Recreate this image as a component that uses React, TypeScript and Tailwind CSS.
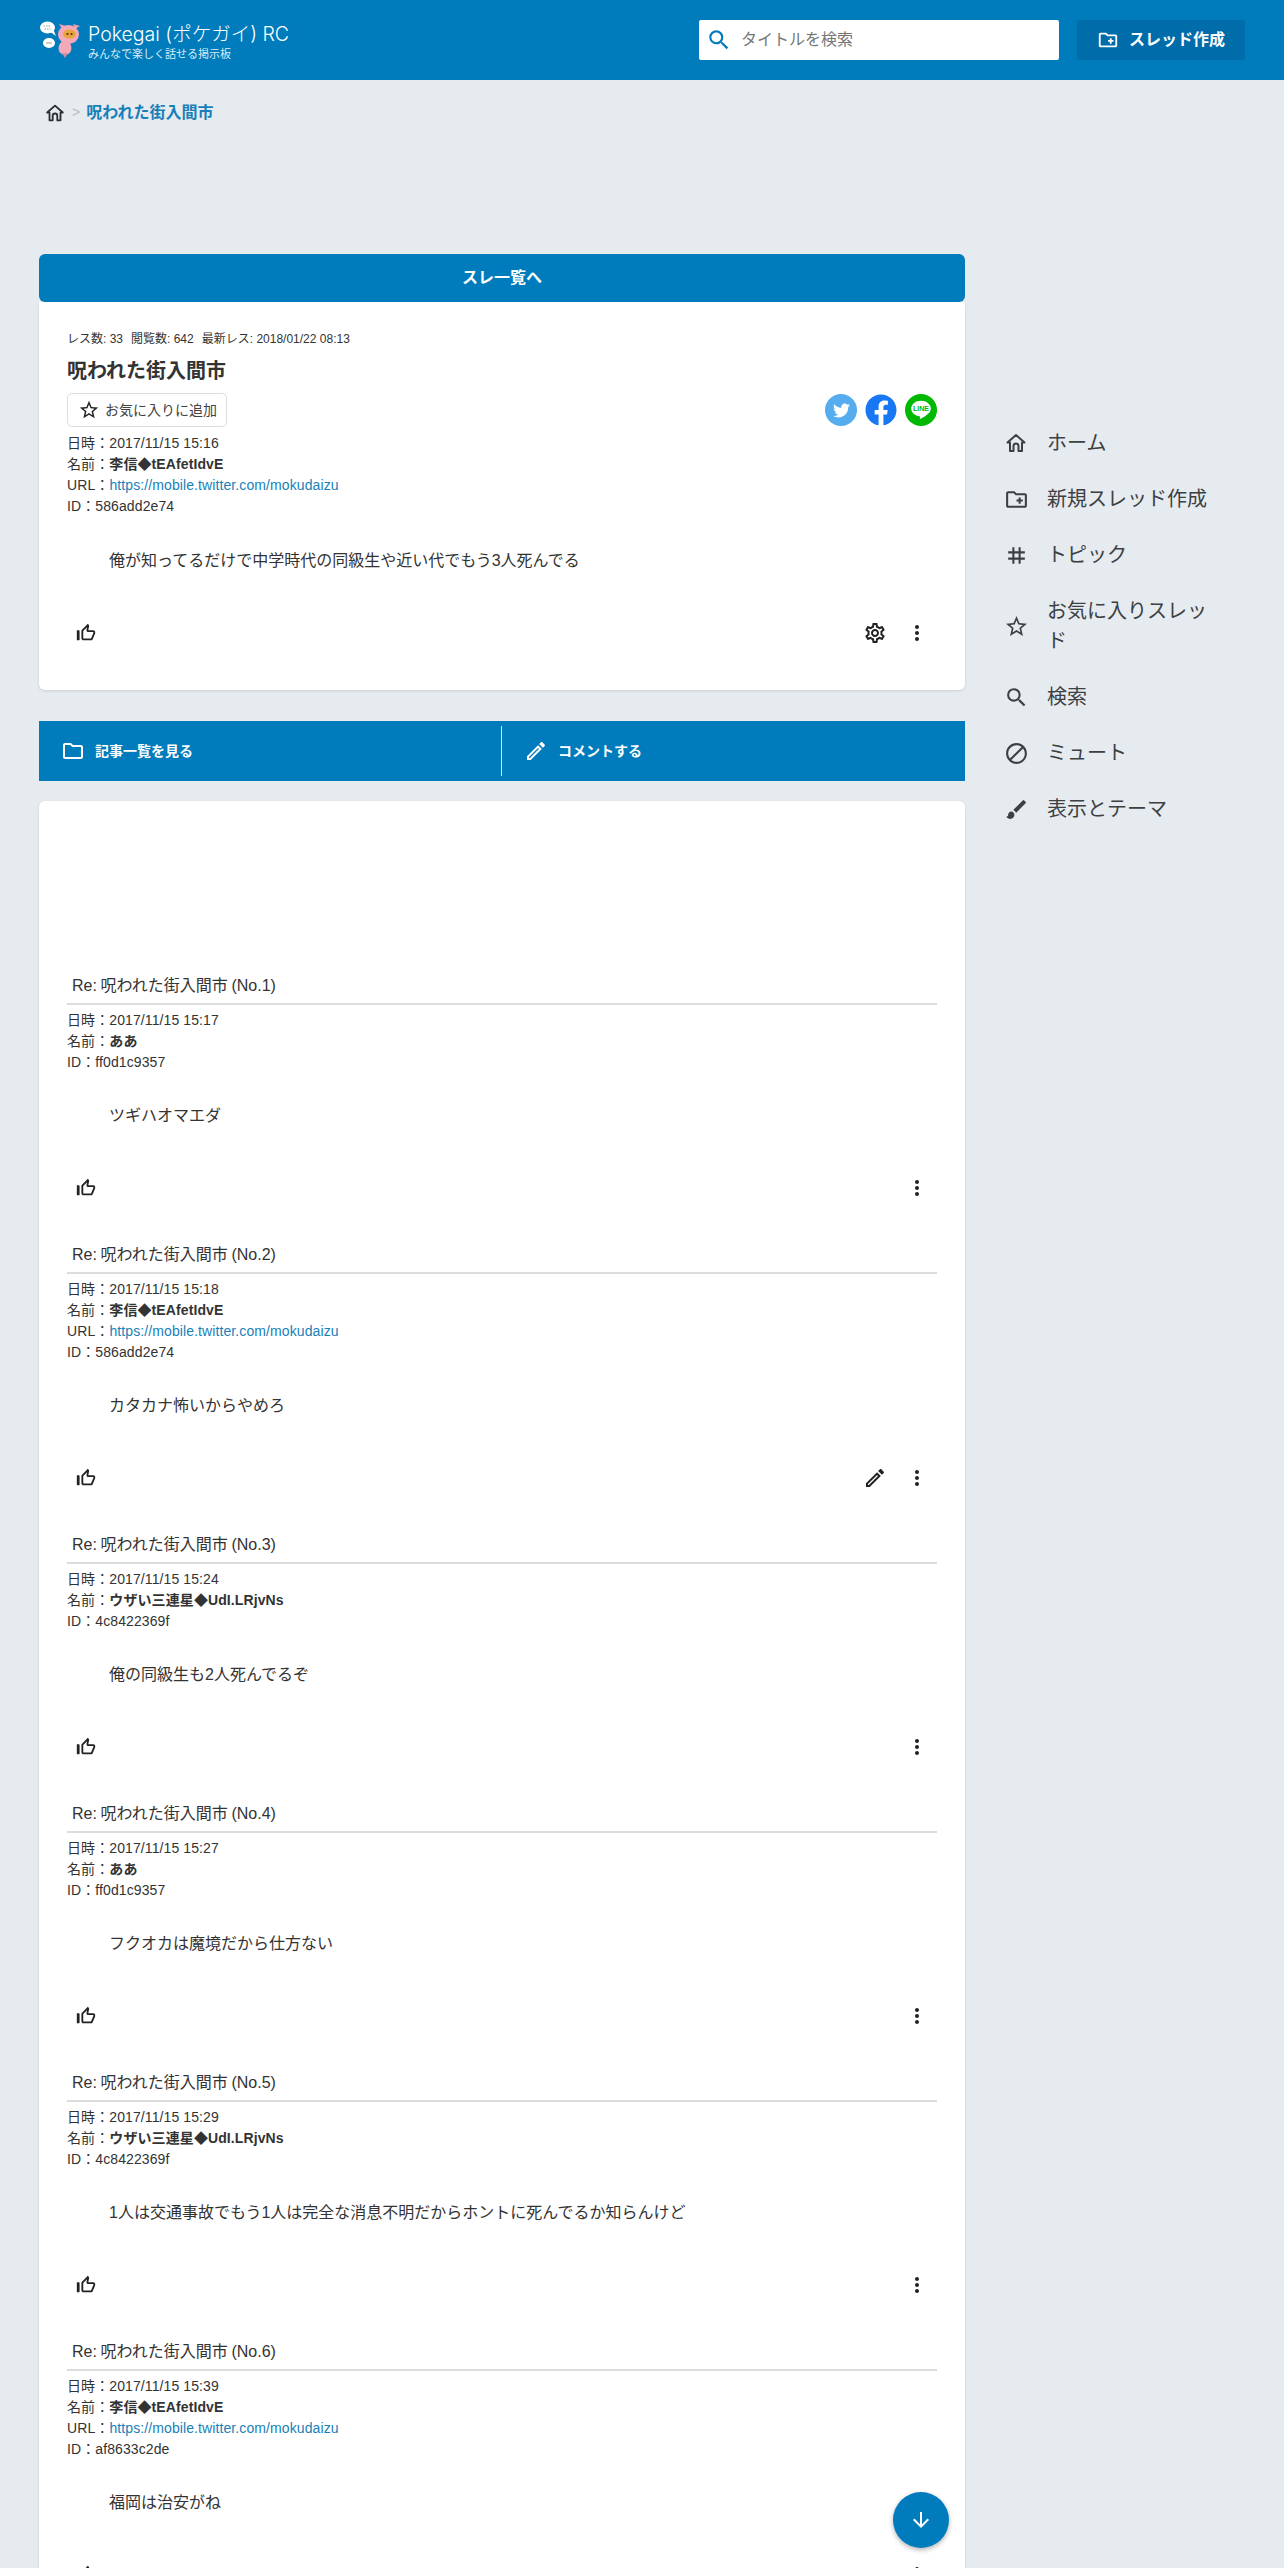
import type { ReactNode } from "react";
import {
  MdArrowDownward,
  MdBlock,
  MdBrush,
  MdMoreVert,
  MdOutlineCreateNewFolder,
  MdOutlineEdit,
  MdOutlineFolder,
  MdOutlineSettings,
  MdThumbUpOffAlt,
  MdSearch,
  MdStarBorder,
  MdTag,
} from "react-icons/md";
import { FaFacebook, FaTwitter } from "react-icons/fa";

const sans = "font-['Liberation_Sans','Noto_Sans_CJK_JP',sans-serif]";

interface PostData {
  no: number;
  date: string;
  name: string;
  url?: boolean;
  id: string;
  body: string;
  edit?: boolean;
}

const posts: PostData[] = [
  { no: 1, date: "2017/11/15 15:17", name: "ああ", id: "ff0d1c9357", body: "ツギハオマエダ" },
  { no: 2, date: "2017/11/15 15:18", name: "李信◆tEAfetIdvE", url: true, id: "586add2e74", body: "カタカナ怖いからやめろ", edit: true },
  { no: 3, date: "2017/11/15 15:24", name: "ウザい三連星◆UdI.LRjvNs", id: "4c8422369f", body: "俺の同級生も2人死んでるぞ" },
  { no: 4, date: "2017/11/15 15:27", name: "ああ", id: "ff0d1c9357", body: "フクオカは魔境だから仕方ない" },
  { no: 5, date: "2017/11/15 15:29", name: "ウザい三連星◆UdI.LRjvNs", id: "4c8422369f", body: "1人は交通事故でもう1人は完全な消息不明だからホントに死んでるか知らんけど" },
  { no: 6, date: "2017/11/15 15:39", name: "李信◆tEAfetIdvE", url: true, id: "af8633c2de", body: "福岡は治安がね" },
];

function HomeIcon({ size = 24 }: { size?: number }) {
  return (
    <svg width={size} height={size} viewBox="0 0 24 24" fill="none" stroke="currentColor" strokeWidth="2" strokeLinejoin="round">
      <path d="M12 4 3.5 11.5H6V20h3.5v-5a2.5 2.5 0 0 1 5 0v5H18v-8.5h2.5z" />
    </svg>
  );
}

const navItems: { label: string; icon: ReactNode }[] = [
  { label: "ホーム", icon: <HomeIcon /> },
  { label: "新規スレッド作成", icon: <MdOutlineCreateNewFolder size={25} /> },
  { label: "トピック", icon: <MdTag size={25} /> },
  { label: "お気に入りスレッド", icon: <MdStarBorder size={25} /> },
  { label: "検索", icon: <MdSearch size={25} /> },
  { label: "ミュート", icon: <MdBlock size={25} /> },
  { label: "表示とテーマ", icon: <MdBrush size={25} /> },
];

function Logo() {
  return (
    <svg width="42" height="38" viewBox="0 0 42 38" className="shrink-0">
      <path d="M10 10l7 5-3-7z" fill="#fff" />
      <ellipse cx="8.5" cy="6.5" rx="7.5" ry="6" fill="#fff" />
      <ellipse cx="10" cy="22" rx="6" ry="5" fill="#fff" />
      <path d="M4.5 5h7M5.5 8h6" stroke="#999" strokeWidth="1" strokeDasharray="1.5 1" />
      <path d="M7 22h6" stroke="#999" strokeWidth="1" />
      <ellipse cx="26" cy="27" rx="6.5" ry="7" fill="#f5a9b8" />
      <path d="M23 32l6 0-3 5z" fill="#d98a9c" />
      <path d="M23 8l-3-5 7 2zM36 8l5-3-7-2z" fill="#ef9fb0" />
      <ellipse cx="29.5" cy="13.5" rx="10.5" ry="9.5" fill="#f5a9b8" />
      <ellipse cx="30.5" cy="13" rx="6.5" ry="4.5" fill="#e8a33a" />
      <circle cx="28.5" cy="13" r="1.1" fill="#4a3420" />
      <circle cx="32.5" cy="13" r="1.1" fill="#4a3420" />
    </svg>
  );
}

function MetaLines({ date, name, url, id }: { date: string; name: string; url?: boolean; id: string }) {
  return (
    <div className="text-[14px] leading-[21px] tracking-[0.1px] text-[#333]">
      <div>日時：{date}</div>
      <div>
        名前：<span className="font-bold">{name}</span>
      </div>
      {url && (
        <div>
          URL：<a className="text-[#187fb9]">https://mobile.twitter.com/mokudaizu</a>
        </div>
      )}
      <div>ID：{id}</div>
    </div>
  );
}

function Actions({ right }: { right: ReactNode }) {
  return (
    <div className="flex items-center justify-between pl-[7px] pr-[8px] text-[#222]">
      <span className="flex w-[24px] justify-center">
        <MdThumbUpOffAlt size={22} />
      </span>
      <div className="flex items-center gap-[18px]">{right}</div>
    </div>
  );
}

function Post({ post }: { post: PostData }) {
  return (
    <article className="pb-[37px]">
      <h3 className="h-[37px] pl-[5px] text-[16px] leading-[36px] text-[#333] [word-spacing:-0.8px] border-b-2 border-[#dcdcdc]">
        Re: 呪われた街入間市 (No.{post.no})
      </h3>
      <div className="mt-[5px]">
        <MetaLines date={post.date} name={post.name} url={post.url} id={post.id} />
      </div>
      <p className="mt-[31px] mb-[48px] pl-[42px] text-[16px] leading-[24px] text-[#333]">{post.body}</p>
      <Actions
        right={
          <>
            {post.edit && <MdOutlineEdit size={24} />}
            <MdMoreVert size={24} />
          </>
        }
      />
    </article>
  );
}

export default function App() {
  return (
    <div className={`relative h-[2568px] overflow-hidden bg-[#e6ebf0] ${sans}`}>
      <header className="flex h-[80px] items-center bg-[#007bbb] pl-[39px] pr-[39px]">
        <Logo />
        <div className="ml-[7px] pt-[3px] text-white">
          <div className="font-['Inter','Noto_Sans_CJK_JP',sans-serif] text-[19.5px] font-light leading-[24px]">Pokegai (ポケガイ) RC</div>
          <div className="mt-[1px] text-[11px] leading-[14px] text-[#d8ecf7]">みんなで楽しく話せる掲示板</div>
        </div>
        <div className="ml-auto flex h-[40px] w-[360px] items-center rounded-[2px] bg-white pl-[7px]">
          <MdSearch size={26} className="text-[#007bbb]" />
          <span className="ml-[9px] text-[16px] text-[#777]">タイトルを検索</span>
        </div>
        <button className="ml-[18px] flex h-[40px] w-[168px] items-center rounded-[2px] bg-[#006daa] pl-[20px] text-[16px] font-bold text-white">
          <MdOutlineCreateNewFolder size={22} className="mr-[10px]" />
          スレッド作成
        </button>
      </header>

      <nav className="flex h-[64px] items-center pl-[44px] pt-[1px]">
        <span className="text-[#2b2f33]">
          <HomeIcon size={22} />
        </span>
        <span className="ml-[6px] text-[14px] text-[#bbb]">&gt;</span>
        <span className="ml-[6px] text-[16px] font-bold text-[#187fb9]">呪われた街入間市</span>
      </nav>

      <div className="flex pl-[39px] pt-[110px]">
        <main className="w-[926px] shrink-0">
          <div className="flex h-[48px] items-center justify-center rounded-[6px] bg-[#007bbb] text-[16px] font-bold text-white">
            スレ一覧へ
          </div>

          <section className="h-[388px] rounded-b-[6px] bg-white px-[28px] pt-[29px] shadow-[0_1px_3px_rgba(0,0,0,0.12)]">
            <div className="flex gap-[8px] text-[12px] leading-[16px] text-[#333]">
              <span>レス数: 33</span>
              <span>閲覧数: 642</span>
              <span>最新レス: 2018/01/22 08:13</span>
            </div>
            <h1 className="mt-[9px] text-[20px] font-bold leading-[30px] text-[#333]">呪われた街入間市</h1>
            <div className="mt-[7px] flex items-center justify-between">
              <button className="flex h-[34px] w-[160px] items-center rounded-[5px] border border-[#ddd] pl-[10px] text-[14px] text-[#444]">
                <MdStarBorder size={22} className="mr-[5px] text-[#222]" />
                お気に入りに追加
              </button>
              <div className="flex gap-[8px]">
                <span className="flex size-[32px] items-center justify-center rounded-full bg-[#55acee] text-white">
                  <FaTwitter size={17} />
                </span>
                <span className="flex size-[32px] items-center justify-center rounded-full bg-white text-[#1877f2]">
                  <FaFacebook size={32} />
                </span>
                <span className="relative flex size-[32px] items-center justify-center rounded-full bg-[#00b900]">
                  <svg width="24" height="24" viewBox="0 0 22 22">
                    <path d="M11 2.5c-5 0-9 3.2-9 7.2 0 3.6 3.2 6.6 7.5 7.1.6.1.6.4.5 1l-.1 1c0 .4.3.5.7.3 2.5-1.4 7-4.4 8.6-6.6.6-.8.8-1.8.8-2.8 0-4-4-7.2-9-7.2z" fill="#fff" />
                    <text x="11" y="12" textAnchor="middle" fontSize="6.5" fontWeight="700" fill="#00b900" fontFamily="Liberation Sans">LINE</text>
                  </svg>
                </span>
              </div>
            </div>
            <div className="mt-[6px]">
              <MetaLines date="2017/11/15 15:16" name="李信◆tEAfetIdvE" url id="586add2e74" />
            </div>
            <p className="mt-[32px] mb-[48px] pl-[42px] text-[16px] leading-[24px] text-[#333]">
              俺が知ってるだけで中学時代の同級生や近い代でもう3人死んでる
            </p>
            <Actions
              right={
                <>
                  <MdOutlineSettings size={24} />
                  <MdMoreVert size={24} />
                </>
              }
            />
          </section>

          <div className="mt-[31px] flex h-[60px] items-center bg-[#007bbb] text-[14px] font-bold text-white">
            <div className="flex h-[50px] w-[463px] items-center border-r border-[#cfe6f3] pl-[22px]">
              <MdOutlineFolder size={24} className="mr-[10px]" />
              記事一覧を見る
            </div>
            <div className="flex items-center pl-[22px]">
              <MdOutlineEdit size={24} className="mr-[10px]" />
              コメントする
            </div>
          </div>

          <section className="mt-[20px] rounded-t-[6px] bg-white px-[28px] pt-[167px] shadow-[0_1px_3px_rgba(0,0,0,0.12)]">
            {posts.map((post) => (
              <Post key={post.no} post={post} />
            ))}
          </section>
        </main>

        <aside className="ml-[39px] w-[240px] pt-[161px] text-[#3c4043]">
          {navItems.map((item) => (
            <div key={item.label} className="flex items-center py-[13px]">
              <span className="flex w-[43px] shrink-0">{item.icon}</span>
              <span className="w-[170px] text-[20px] leading-[30px]">{item.label}</span>
            </div>
          ))}
        </aside>
      </div>

      <button className="absolute left-[893px] top-[2492px] flex size-[56px] items-center justify-center rounded-full bg-[#007bbb] text-white shadow-[0_2px_5px_rgba(0,0,0,0.3)]">
        <MdArrowDownward size={24} />
      </button>
    </div>
  );
}
